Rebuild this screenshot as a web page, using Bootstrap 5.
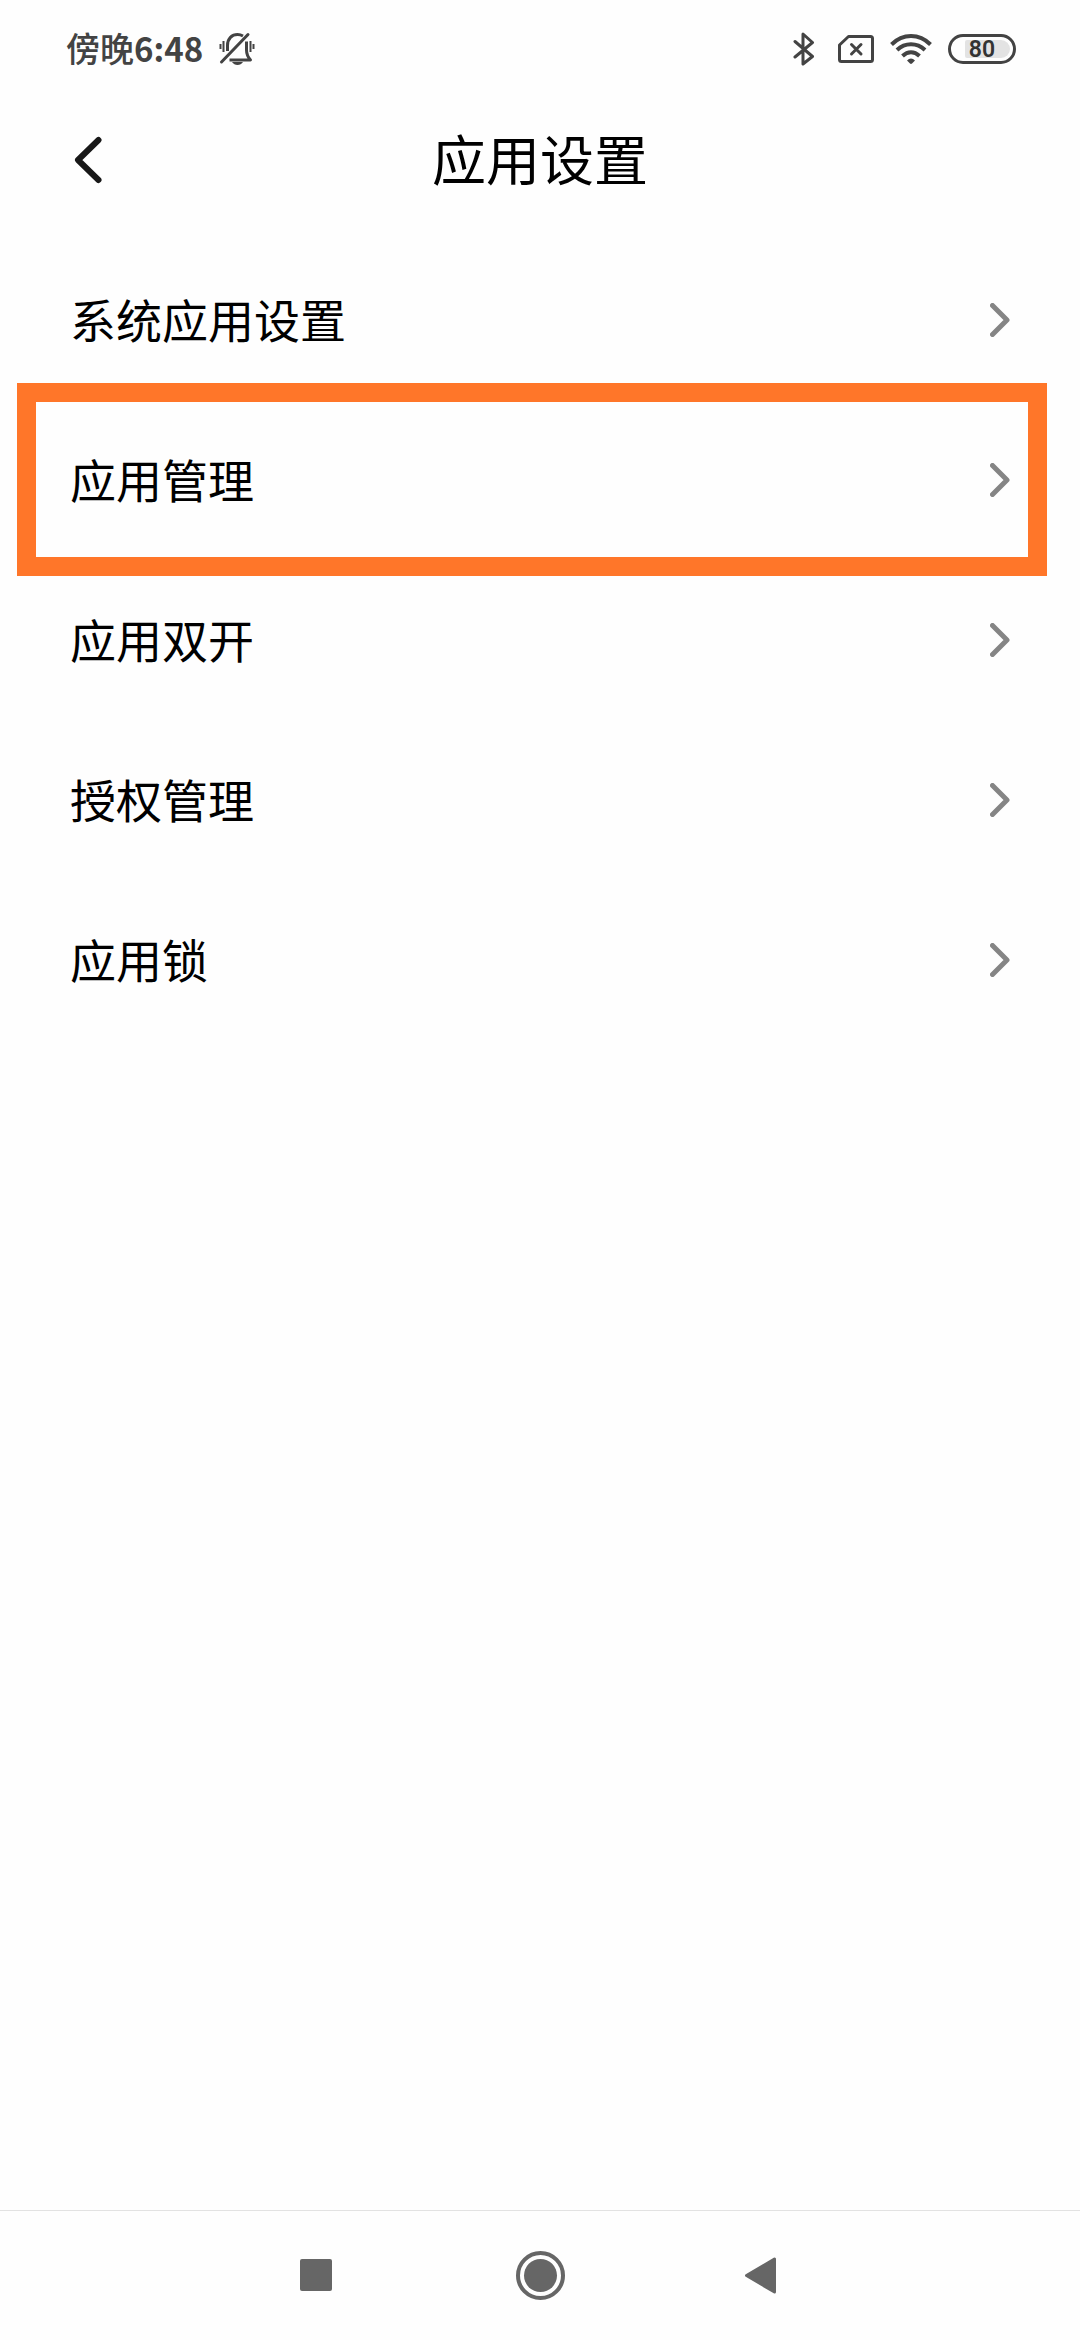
<!DOCTYPE html>
<html lang="zh-CN">
<head>
<meta charset="utf-8">
<meta name="viewport" content="width=device-width, initial-scale=1">
<title>应用设置</title>
<link href="https://cdn.jsdelivr.net/npm/bootstrap@5.3.0/dist/css/bootstrap.min.css" rel="stylesheet">
<style>
  body { font-family: "Noto Sans CJK SC", sans-serif; background: #fefefe; color: #000; }
  svg { display: block; }
  .status-bar { height: 98px; padding: 0 64px 0 66px; color: #434343; }
  .status-time { font-size: 34px; line-height: 48px; font-weight: 500; padding-bottom: 2px; }
  .status-time b { font-size: 33px; }
  .status-icons { gap: 16px; }
  .battery { width: 68px; height: 30px; border: 3px solid #434343; border-radius: 15px; font: 600 23px/25px Roboto, sans-serif; color: #333; }
  .battery-level { top: 3px; bottom: 3px; right: 3px; background: #e3e3e3; border-radius: 2px 9px 9px 2px; }
  .title-bar { height: 124px; padding: 0 70px; }
  .title-bar h1 { font-size: 54px; line-height: 80px; font-weight: 400; padding-bottom: 4px; }
  .side-slot { width: 40px; }
  .settings { padding-top: 18px; }
  .settings-row { height: 160px; padding: 0 70px; font-size: 46px; line-height: 68px; color: #000; }
  .settings-row span { padding-bottom: 4px; }
  .highlight { inset: -17px 33px -16px 17px; border: 19px solid #ff7629; pointer-events: none; }
  .nav-keys { gap: 174px; padding: 40px 0 39px; border-top: 1px solid #e2e2e2; color: #666; }
</style>
<script src="https://cdn.jsdelivr.net/npm/bootstrap@5.3.0/dist/js/bootstrap.bundle.min.js"></script>
</head>
<body class="min-vh-100 d-flex flex-column">
<svg class="d-none" aria-hidden="true">
  <symbol id="chevron" viewBox="0 0 20 34"><path d="M2.5 2.5 17 17 2.5 31.5" fill="none" stroke="#858585" stroke-width="5" stroke-linecap="round" stroke-linejoin="round"/></symbol>
</svg>

<div class="status-bar d-flex align-items-center justify-content-between">
  <div class="d-flex align-items-center status-icons">
    <span class="status-time">傍晚<b>6:48</b></span>
    <svg width="36" height="34" viewBox="0 0 36 34" fill="none" stroke="#434343" stroke-width="3" aria-label="静音" role="img">
      <path d="M2.500 30 29 2.500" stroke-linecap="round"/>
      <path d="M8.500 19V13.500C8.500 6.500 13 2.500 18.500 2.500Q21.500 2.500 24 4M27.500 9.500V18Q27.500 23.500 31.500 28H10.500" stroke-linejoin="round"/>
      <path d="M13 30H24Q22 33 18.500 33T13 30Z" fill="#434343" stroke="none"/>
      <path d="M1.500 12V17M4.500 9V20M31.500 9V20M34.500 12V17" stroke-width="2"/>
    </svg>
  </div>
  <div class="d-flex align-items-center status-icons">
    <svg width="36" height="34" viewBox="0 0 36 34" fill="none" stroke="#434343" stroke-width="3" stroke-linecap="round" stroke-linejoin="round" aria-label="蓝牙" role="img">
      <path d="M9 9.500 26.500 24.500 17 32V2L26.500 10.500 9 25"/>
    </svg>
    <svg width="36" height="30" viewBox="0 0 36 30" fill="none" stroke="#434343" stroke-width="3" stroke-linecap="round" stroke-linejoin="round" aria-label="无SIM卡" role="img">
      <path d="M10.500 2.500H32.500Q34.500 2.500 34.500 4.500V25.500Q34.500 27.500 32.500 27.500H3.500Q1.500 27.500 1.500 25.500V11Z"/>
      <path d="M13.500 10.500 23 20M23 10.500 13.500 20"/>
    </svg>
    <svg width="42" height="30" viewBox="0 0 42 30" fill="none" stroke="#434343" stroke-width="4" stroke-linejoin="round" aria-label="WLAN" role="img">
      <path d="M1.500 10.500Q10 2 21 2T40.500 10.500"/>
      <path d="M7 16Q13 10.200 21 10.200T35 16"/>
      <path d="M12.500 22Q16.500 18.300 21 18.300T29.500 22"/>
      <path d="M17 26.500Q21 22.500 25 26.500L22 29.500Q21 30.300 20 29.500Z" fill="#434343" stroke="none"/>
    </svg>
    <div class="battery position-relative text-center">
      <span class="battery-level position-absolute" style="width:45px"></span>
      <span class="position-relative">80</span>
    </div>
  </div>
</div>

<header class="title-bar d-flex align-items-center justify-content-between">
  <button type="button" class="btn p-0 border-0 side-slot" aria-label="返回">
    <svg width="40" height="48" viewBox="0 0 40 48" fill="none" stroke="#181818" stroke-width="6" stroke-linecap="round" stroke-linejoin="round"><path d="M28.500 4 8 24 28.500 44"/></svg>
  </button>
  <h1 class="m-0">应用设置</h1>
  <span class="side-slot"></span>
</header>

<main class="settings flex-grow-1">
  <a href="#" class="settings-row d-flex align-items-center justify-content-between text-decoration-none"><span>系统应用设置</span><svg width="20" height="34"><use href="#chevron"/></svg></a>
  <div class="position-relative">
    <a href="#" class="settings-row d-flex align-items-center justify-content-between text-decoration-none"><span>应用管理</span><svg width="20" height="34"><use href="#chevron"/></svg></a>
    <div class="highlight position-absolute"></div>
  </div>
  <a href="#" class="settings-row d-flex align-items-center justify-content-between text-decoration-none"><span>应用双开</span><svg width="20" height="34"><use href="#chevron"/></svg></a>
  <a href="#" class="settings-row d-flex align-items-center justify-content-between text-decoration-none"><span>授权管理</span><svg width="20" height="34"><use href="#chevron"/></svg></a>
  <a href="#" class="settings-row d-flex align-items-center justify-content-between text-decoration-none"><span>应用锁</span><svg width="20" height="34"><use href="#chevron"/></svg></a>
</main>

<nav class="nav-keys d-flex justify-content-center" aria-label="系统导航">
  <button type="button" class="btn p-0 border-0" aria-label="最近任务">
    <svg width="50" height="50" viewBox="0 0 50 50" fill="#666"><rect x="9" y="8" width="32" height="32" rx="2"/></svg>
  </button>
  <button type="button" class="btn p-0 border-0" aria-label="主屏幕">
    <svg width="50" height="50" viewBox="0 0 50 50"><circle cx="25.500" cy="24.500" r="22.500" fill="none" stroke="#666" stroke-width="4"/><circle cx="25.500" cy="24.500" r="16.500" fill="#666"/></svg>
  </button>
  <button type="button" class="btn p-0 border-0" aria-label="返回">
    <svg width="50" height="50" viewBox="0 0 50 50" fill="#666" stroke="#666" stroke-width="3" stroke-linejoin="round"><path d="M7.500 24.500 35.500 8V41Z"/></svg>
  </button>
</nav>
</body>
</html>
